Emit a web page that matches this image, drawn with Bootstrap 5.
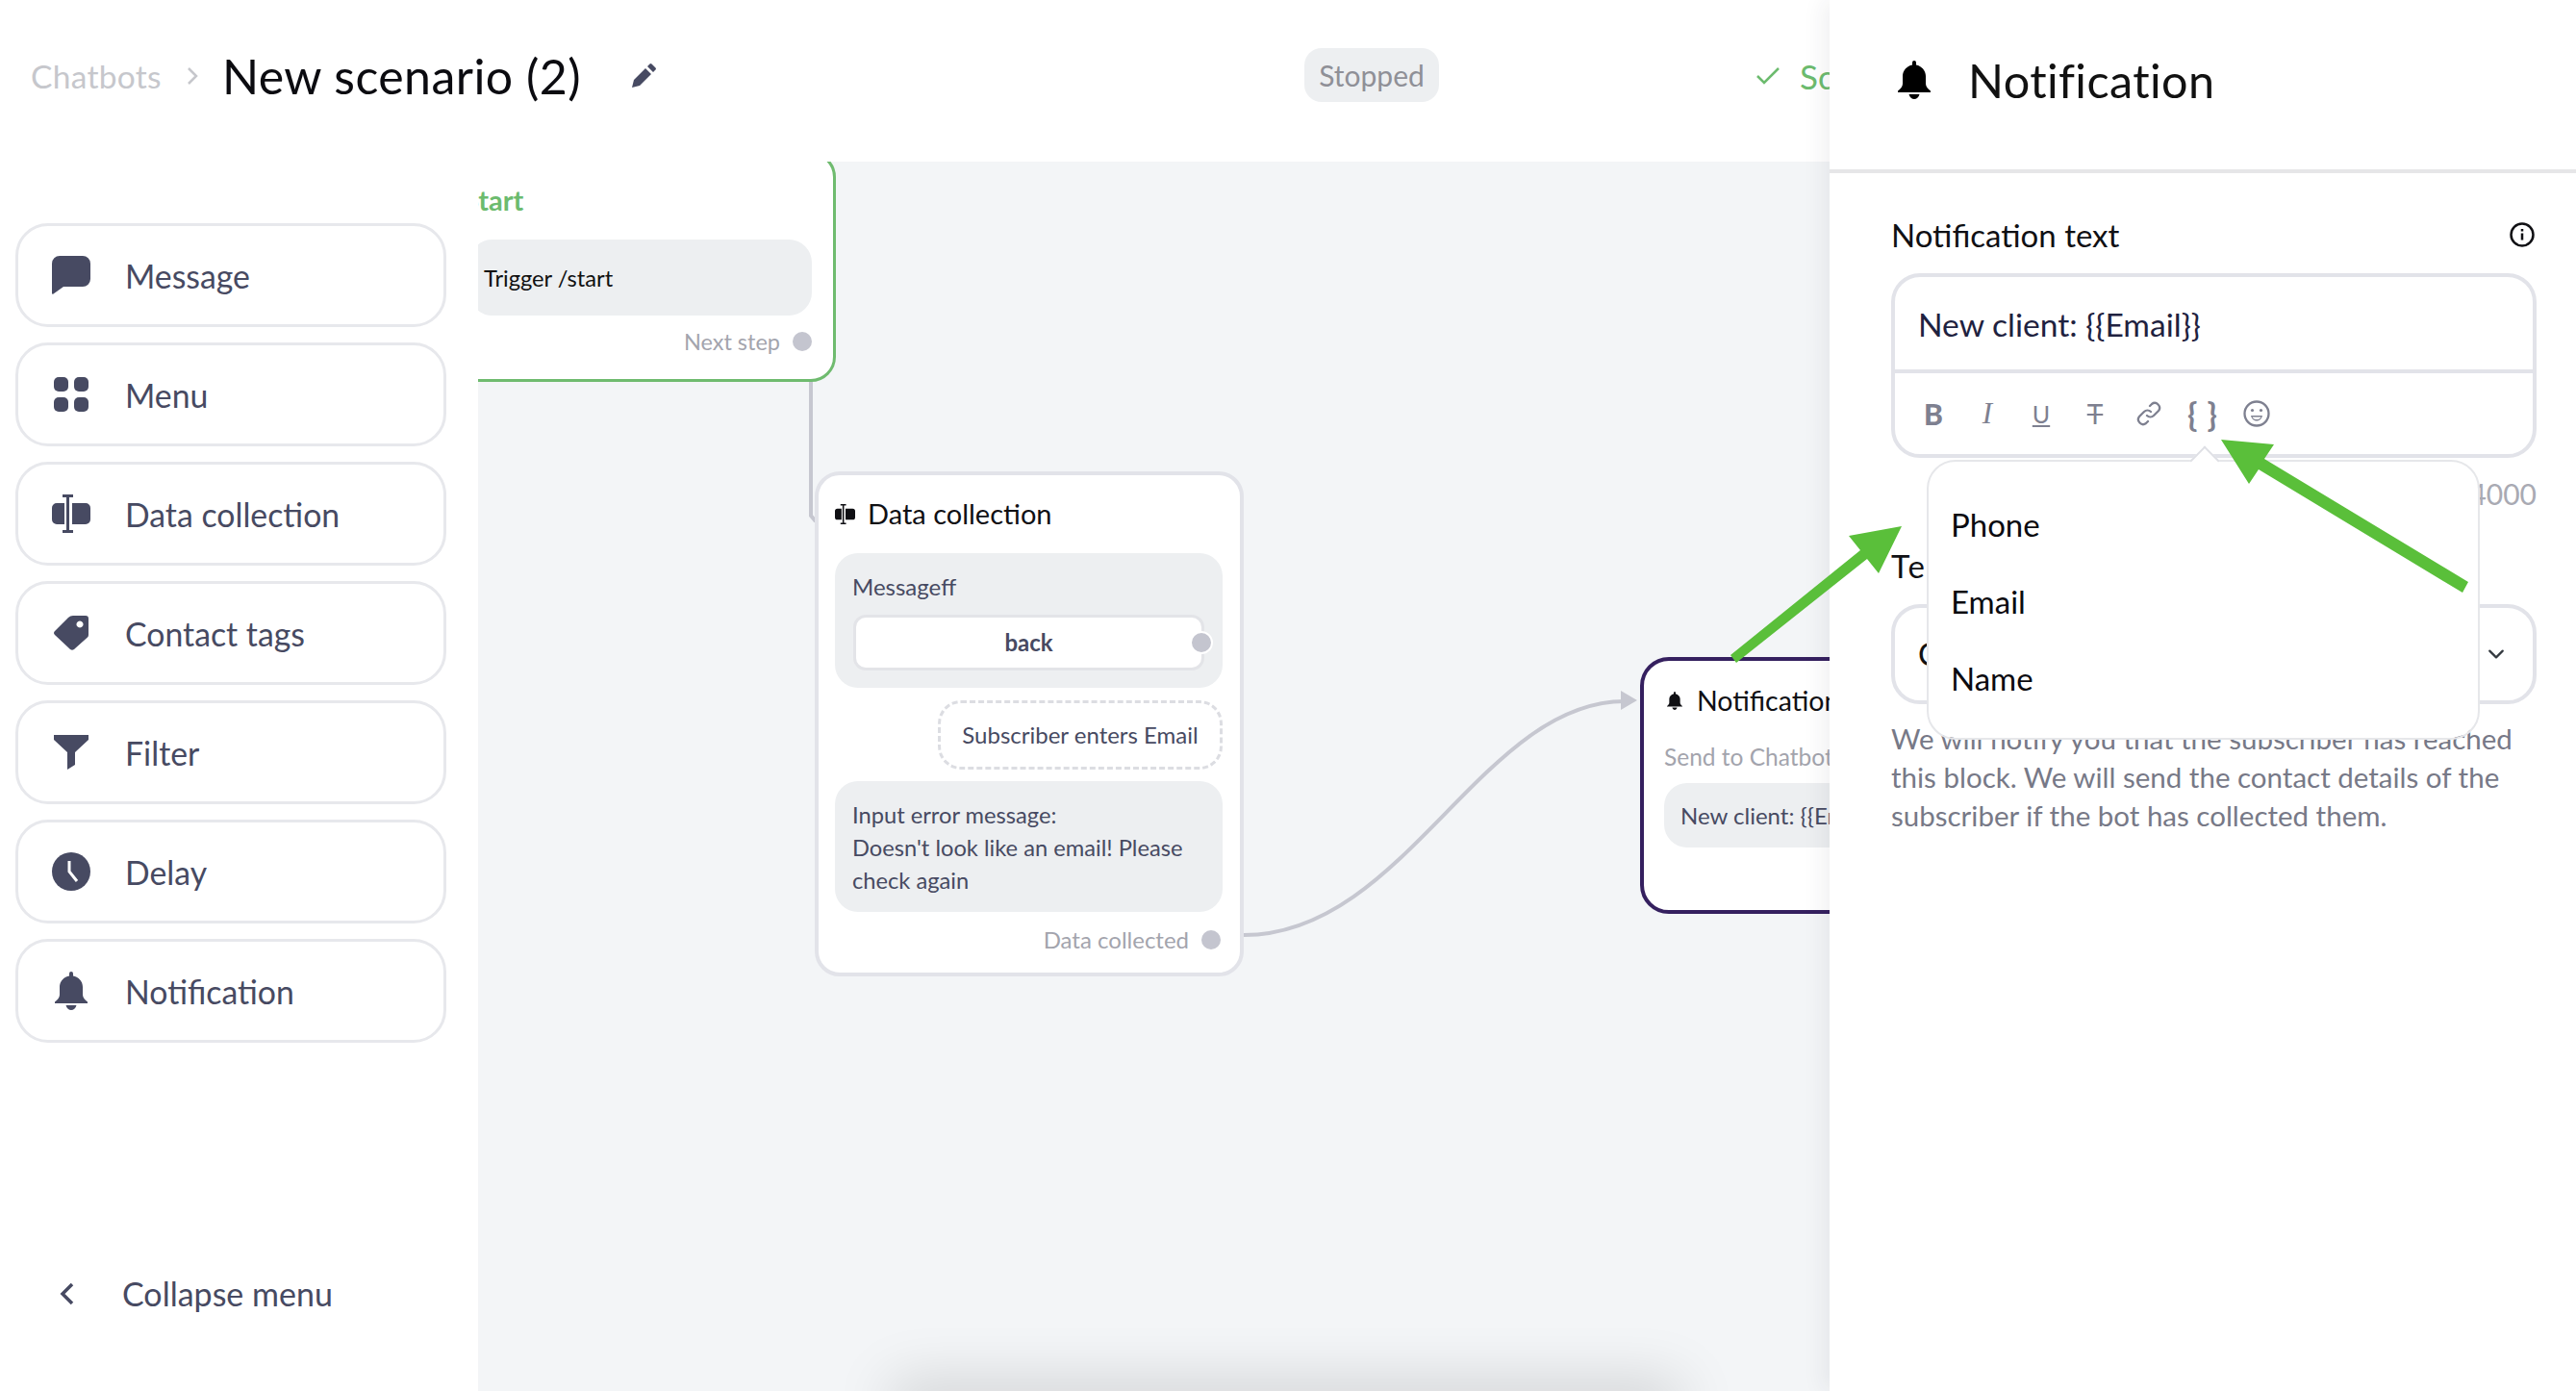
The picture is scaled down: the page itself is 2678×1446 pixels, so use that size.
<!DOCTYPE html>
<html lang="en">
  <head>
    <meta charset="utf-8" />
    <title>New scenario (2)</title>
    <link href="https://cdn.jsdelivr.net/npm/bootstrap@5.3.1/dist/css/bootstrap.min.css" rel="stylesheet" />
    <style>
      html, body { height: 100%; overflow: hidden; }
      body { font-family: "Lato", "Liberation Sans", sans-serif; color: #474a62; background: #fff; }
      svg { display: block; flex: none; }

      .app-shell { width: 2678px; height: 1446px; overflow: hidden; }

      /* top bar */
      .top-bar { height: 168px; padding: 0 0 10px 32px; }
      .top-left { flex: 0 0 1324px; }
      .crumb { font-size: 33.500px; color: #c6c7cc; letter-spacing: .3px; }
      .crumb-sep { margin: 0 25px 0 26px; }
      .scenario-title { font-size: 50px; color: #0b0b10; margin: 0 52px 0 0; font-weight: 400; line-height: 60px; letter-spacing: .45px; }
      .state-pill { width: 140px; height: 56px; margin-top: -2px; border-radius: 18px; background: #edeff1; color: #8f9097; font-size: 30px; }
      .save-state { margin-left: 330px; color: #6cbb6e; font-size: 35px; white-space: nowrap; gap: 21px; }

      /* left palette */
      .work-area { height: 1278px; }
      .palette { flex: 0 0 497px; padding: 64px 33px 77px 16px; gap: 16px; }
      .palette-item { height: 108px; border: 3px solid #e7e8ec; border-radius: 34px; padding: 0 0 0 35px; gap: 36px; font-size: 33.800px; color: #474a62; text-align: left; }
      .item-label { padding-top: 3px; }
      .icon-slot { width: 40px; }
      .collapse-link { padding-left: 46px; gap: 50px; font-size: 34px; line-height: 44px; margin-top: auto; margin-bottom: 2px; color: #474a62; }

      /* flow canvas */
      .flow-canvas { flex: 1 1 auto; background: #f3f5f7; overflow: hidden; }
      .edge-layer { position: absolute; left: 0; top: 0; }
      .flow-node { position: absolute; background: #fff; border: 4px solid #e2e3e9; border-radius: 26px; }
      .node-start { left: -31px; top: -10px; width: 403px; height: 239px; border-width: 3px; border-color: #6fbb6f; padding: 29px 22px 0 19px; }
      .node-data { left: 350px; top: 322px; width: 446px; height: 525px; padding: 22px 18px 0 17px; }
      .node-notify { left: 1208px; top: 515px; width: 445px; height: 267px; border-color: #35205f; border-radius: 30px; padding: 23px 20px 0 21px; }
      .node-title { font-size: 29px; line-height: 36px; color: #101014; gap: 13px; }
      .node-start .node-title { color: #6cbb6e; font-weight: 700; margin-left: -6px; }
      .node-block { background: #edeff1; border-radius: 24px; font-size: 24px; line-height: 34px; }
      .block-trigger { height: 79px; margin-top: 23px; padding-left: 15px; color: #111; font-size: 23.700px; }
      .block-ask { height: 140px; margin-top: 23px; padding: 18px 18px 0 18px; }
      .block-error { margin-top: 12px; padding: 18px 18px 16px 18px; font-size: 23.700px; }
      .block-text { height: 67px; margin-top: 12px; padding-left: 17px; }
      .reply-button { height: 58px; margin: 12px 1px 0 1px; background: #fff; border: 3px solid #e3e4e8; border-radius: 13px; font-size: 24px; font-weight: 700; }
      .port-dot { width: 20px; height: 20px; border-radius: 50%; background: #c4c5cf; flex: none; }
      .port-over { position: absolute; right: -12px; top: 50%; margin-top: -12px; width: 24px; height: 24px; border: 2px solid #fff; }
      .dashed-box { width: 296px; height: 72px; margin: 13px 0 0 auto; border: 3px dashed #dcdde2; border-radius: 24px; font-size: 24px; }
      .out-row { line-height: 30px; font-size: 24px; color: #a3a4ad; gap: 13px; }
      .out-start { margin-top: 12px; font-size: 23.500px; }
      .out-data { margin: 14px 2px 0 0; }
      .send-to { margin-top: 26px; font-size: 24.500px; line-height: 30px; color: #a3a4ad; white-space: nowrap; }
      .node-notify .node-title { padding-left: 3px; gap: 15px; font-size: 28.500px; }
      .floor-shade { position: absolute; left: 440px; width: 800px; bottom: -30px; height: 30px; box-shadow: 0 0 60px 10px rgba(0, 0, 0, .15); }

      /* right panel */
      .side-panel { position: absolute; left: 1902px; top: 0; width: 776px; height: 1446px; background: #fff; box-shadow: -6px 0 22px rgba(40, 40, 60, .07); }
      .panel-head { height: 180px; border-bottom: 4px solid #e6e6e8; padding-left: 71px; padding-bottom: 10px; gap: 39px; }
      .panel-title { font-size: 48.500px; color: #111; margin: 0; font-weight: 400; letter-spacing: .4px; }
      .panel-body { padding: 42px 41px 0 64px; }
      .field-label { font-size: 33px; line-height: 44px; color: #101014; }
      .info-mark { margin-right: 2px; }
      .editor-box { margin-top: 18px; height: 192px; border: 4px solid #e2e3e9; border-radius: 30px; }
      .editor-input { height: 96px; padding: 3px 0 0 24px; font-size: 33.600px; color: #1f2240; }
      .editor-tools { height: 88px; border-top: 4px solid #e2e3e9; padding: 0 0 0 12px; background: transparent; color: #7e8090; }
      .tool-btn { width: 56px; font-size: 28px; line-height: 32px; text-align: center; }
      .tool-bold { font-weight: 900; font-size: 30px; }
      .tool-slant { font-family: "Liberation Serif", serif; font-style: italic; font-size: 31px; }
      .tool-under { font-size: 25px; }
      .tool-mono { font-weight: 700; font-size: 34px; letter-spacing: 1px; white-space: nowrap; }
      .char-count { margin-top: 19px; font-size: 30px; line-height: 36px; color: #a9aab3; text-align: right; }
      .second-label { margin-top: 35px; letter-spacing: 2px; }
      .send-select { margin-top: 18px; height: 104px; border: 4px solid #e2e3e9; border-radius: 30px; padding-left: 24px; font-size: 33px; color: #111; background-size: 24px 18px; background-position: right 26px center; }
      .field-note { margin: 16px 0 0 0; font-size: 29.500px; line-height: 40px; color: #777987; }
      .var-menu { left: 101px; top: 478px; width: 575px; height: 291px; margin: 0; padding: 26px 0 0 0; border: 2px solid #e6e7ea; border-radius: 30px; z-index: 5; }
      .var-menu::before { content: ""; position: absolute; left: 276px; top: -12px; width: 22px; height: 22px; background: #fff; border-left: 2px solid #dfe0e5; border-top: 2px solid #dfe0e5; transform: rotate(45deg); }
      .var-menu .dropdown-item { height: 80px; display: flex; align-items: center; padding: 0 23px; font-size: 33px; color: #0b0b10; }

      .arrow-layer { position: absolute; left: 0; top: 0; z-index: 10; pointer-events: none; }
    </style>
  </head>
  <body>
    <svg width="0" height="0" class="position-absolute">
      <symbol id="bell-shape" viewBox="0 0 34 40">
        <path d="M17 0a2 2 0 0 1 2 2v2.400c5.700 1 10 6 10 11.600v8c0 3 2 5 5 7.500V33H0v-1.500c3-2.500 5-4.500 5-7.500v-8C5 10.400 9.300 5.400 15 4.400V2a2 2 0 0 1 2-2z" />
        <path d="M11.500 35h11c-1 3.500-3 5-5.500 5s-4.500-1.500-5.500-5z" />
      </symbol>
      <symbol id="field-shape" viewBox="0 0 40 40">
        <path d="M13 9H5a5 5 0 0 0-5 5v12a5 5 0 0 0 5 5h8zM21 9h14a5 5 0 0 1 5 5v12a5 5 0 0 1-5 5H21z" />
        <path d="M11 0h11v3h-4v34h4v3H11v-3h4V3h-4z" />
      </symbol>
    </svg>

    <div class="app-shell position-relative">
      <header class="top-bar d-flex align-items-center">
        <div class="top-left d-flex align-items-center">
          <span class="crumb">Chatbots</span>
          <svg class="crumb-sep" width="12" height="20" viewBox="0 0 12 20" fill="none" stroke="#c6c7cc" stroke-width="2.500"><path d="M2 2l8 8-8 8" /></svg>
          <h1 class="scenario-title">New scenario (2)</h1>
          <svg width="26" height="26" viewBox="0 0 26 26" fill="#474a62"><path d="M1 25l2-8L15 5l6 6L9 23zM17 3l2.500-2.500a1.500 1.500 0 0 1 2 0l4 4a1.500 1.500 0 0 1 0 2L23 9z" /></svg>
        </div>
        <span class="state-pill d-flex align-items-center justify-content-center">Stopped</span>
        <span class="save-state d-flex align-items-center">
          <svg width="24" height="18" viewBox="0 0 24 18" fill="none" stroke="#6cbb6e" stroke-width="2.500"><path d="M1 9l7 7L23 1" /></svg>
          Scenario saved
        </span>
      </header>

      <div class="work-area d-flex">
        <aside class="palette d-flex flex-column">
          <button class="btn palette-item d-flex align-items-center">
            <span class="icon-slot d-flex justify-content-center"><svg width="40" height="40" viewBox="0 0 40 40" fill="#474a62"><path d="M8 0h24a8 8 0 0 1 8 8v16a8 8 0 0 1-8 8H12L1.500 39.500Q0 40.500 0 38.500V8a8 8 0 0 1 8-8z" /></svg></span>
            <span class="item-label">Message</span>
          </button>
          <button class="btn palette-item d-flex align-items-center">
            <span class="icon-slot d-flex justify-content-center"><svg width="36" height="36" viewBox="0 0 36 36" fill="#474a62"><rect width="15" height="15" rx="5" /><rect x="21" width="15" height="15" rx="5" /><rect y="21" width="15" height="15" rx="5" /><rect x="21" y="21" width="15" height="15" rx="5" /></svg></span>
            <span class="item-label">Menu</span>
          </button>
          <button class="btn palette-item d-flex align-items-center">
            <span class="icon-slot d-flex justify-content-center"><svg width="40" height="40" fill="#474a62"><use href="#field-shape" /></svg></span>
            <span class="item-label">Data collection</span>
          </button>
          <button class="btn palette-item d-flex align-items-center">
            <span class="icon-slot d-flex justify-content-center"><svg width="36" height="36" viewBox="0 0 36 36" fill="#474a62" fill-rule="evenodd"><path d="M1 16L15 2q2-2 5-2h13q3 0 3 3v17q0 1.500-1 2.500L21 35q-2 1.500-4 0L1 20q-2-2 0-4zM27 5.500a3.500 3.500 0 1 0 .01 0z" /></svg></span>
            <span class="item-label">Contact tags</span>
          </button>
          <button class="btn palette-item d-flex align-items-center">
            <span class="icon-slot d-flex justify-content-center"><svg width="36" height="36" viewBox="0 0 36 36" fill="#474a62"><path d="M0 0h36v5L22 18v13l-8 5V18L0 5z" /></svg></span>
            <span class="item-label">Filter</span>
          </button>
          <button class="btn palette-item d-flex align-items-center">
            <span class="icon-slot d-flex justify-content-center"><svg width="40" height="40" viewBox="0 0 40 40"><circle cx="20" cy="20" r="20" fill="#474a62" /><path d="M18 9v11l8 10" fill="none" stroke="#fff" stroke-width="3" /></svg></span>
            <span class="item-label">Delay</span>
          </button>
          <button class="btn palette-item d-flex align-items-center">
            <span class="icon-slot d-flex justify-content-center"><svg width="34" height="40" fill="#474a62"><use href="#bell-shape" /></svg></span>
            <span class="item-label">Notification</span>
          </button>
          <div class="collapse-link d-flex align-items-center">
            <svg width="15" height="24" viewBox="0 0 15 24" fill="none" stroke="#474a62" stroke-width="3.500"><path d="M13 2L3 12l10 10" /></svg>
            Collapse menu
          </div>
        </aside>

        <main class="flow-canvas position-relative">
          <svg class="edge-layer" width="1405" height="1278" fill="none" stroke="#c6c7d0" stroke-width="4">
            <path d="M346 190V368l5 6" />
            <path d="M796 804C963 804 1043 561 1192 561" />
            <path d="M1188 550l17 10-17 10z" fill="#c6c7d0" stroke="none" />
          </svg>

          <div class="flow-node node-start">
            <div class="node-title">Start</div>
            <div class="node-block block-trigger d-flex align-items-center">Trigger /start</div>
            <div class="out-row out-start d-flex justify-content-end align-items-center">Next step <span class="port-dot"></span></div>
          </div>

          <div class="flow-node node-data">
            <div class="node-title d-flex align-items-center">
              <svg width="21" height="21" fill="#101014"><use href="#field-shape" /></svg>
              Data collection
            </div>
            <div class="node-block block-ask">
              Messageff
              <div class="reply-button position-relative d-flex align-items-center justify-content-center">back <span class="port-dot port-over"></span></div>
            </div>
            <div class="dashed-box d-flex align-items-center justify-content-center">Subscriber enters Email</div>
            <div class="node-block block-error">Input error message:<br />Doesn't look like an email! Please check again</div>
            <div class="out-row out-data d-flex justify-content-end align-items-center">Data collected <span class="port-dot"></span></div>
          </div>

          <div class="flow-node node-notify">
            <div class="node-title d-flex align-items-center">
              <svg width="16" height="19" fill="#101014"><use href="#bell-shape" /></svg>
              Notification
            </div>
            <div class="send-to">Send to Chatbot</div>
            <div class="node-block block-text d-flex align-items-center">New client: {{Email}}</div>
          </div>

          <div class="floor-shade"></div>
        </main>
      </div>

      <aside class="side-panel">
        <div class="panel-head d-flex align-items-center">
          <svg width="34" height="40" fill="#000"><use href="#bell-shape" /></svg>
          <h2 class="panel-title">Notification</h2>
        </div>
        <div class="panel-body">
          <div class="field-label d-flex justify-content-between align-items-center">
            Notification text
            <svg class="info-mark" width="26" height="26" viewBox="0 0 26 26" fill="none" stroke="#101014" stroke-width="2.500"><circle cx="13" cy="13" r="11.500" /><path d="M13 11.500v7M13 7v2.500" /></svg>
          </div>
          <div class="card editor-box">
            <div class="editor-input d-flex align-items-center">New client: {{Email}}</div>
            <div class="editor-tools d-flex align-items-center">
              <span class="tool-btn tool-bold">B</span>
              <span class="tool-btn tool-slant">I</span>
              <span class="tool-btn tool-under"><u>U</u></span>
              <span class="tool-btn"><s>T</s></span>
              <span class="tool-btn d-flex justify-content-center">
                <svg width="26" height="26" viewBox="0 0 26 26" fill="none" stroke="#7e8090" stroke-width="2.300" stroke-linecap="round"><path d="M11 15a5 5 0 0 0 7 0l5-5a5 5 0 0 0-7-7l-2 2" /><path d="M15 11a5 5 0 0 0-7 0l-5 5a5 5 0 0 0 7 7l2-2" /></svg>
              </span>
              <span class="tool-btn tool-mono">{ }</span>
              <span class="tool-btn d-flex justify-content-center">
                <svg width="28" height="28" viewBox="0 0 28 28" fill="none" stroke="#7e8090" stroke-width="2.300"><circle cx="14" cy="14" r="12.500" /><path d="M8 16c1 4 3.500 5.500 6 5.500s5-1.500 6-5.500z" fill="#7e8090" stroke="none" /><path d="M9.500 17.500c1 2 2.500 2.500 4.500 2.500s3.500-.5 4.500-2.500z" fill="#fff" stroke="none" /><circle cx="9.500" cy="10.500" r="1.600" fill="#7e8090" stroke="none" /><circle cx="18.500" cy="10.500" r="1.600" fill="#7e8090" stroke="none" /></svg>
              </span>
            </div>
          </div>
          <div class="char-count">21 / 4000</div>
          <div class="field-label second-label">Telegram</div>
          <select class="form-select send-select"><option>Chatbot</option></select>
          <p class="field-note">We will notify you that the subscriber has reached this block. We will send the contact details of the subscriber if the bot has collected them.</p>
        </div>
        <ul class="dropdown-menu show var-menu list-unstyled">
          <li><a class="dropdown-item" href="#">Phone</a></li>
          <li><a class="dropdown-item" href="#">Email</a></li>
          <li><a class="dropdown-item" href="#">Name</a></li>
        </ul>
      </aside>

      <svg class="arrow-layer" width="2678" height="1446" fill="#5abf3a">
        <polygon points="1799,681 1934,572 1922,557 1977,547 1953,596 1941,581 1805,689" />
        <polygon points="2566,605 2354,477 2364,462 2309,457 2338,503 2348,488 2560,616" />
      </svg>
    </div>

    <script src="https://cdn.jsdelivr.net/npm/bootstrap@5.3.1/dist/js/bootstrap.bundle.min.js"></script>
  </body>
</html>
